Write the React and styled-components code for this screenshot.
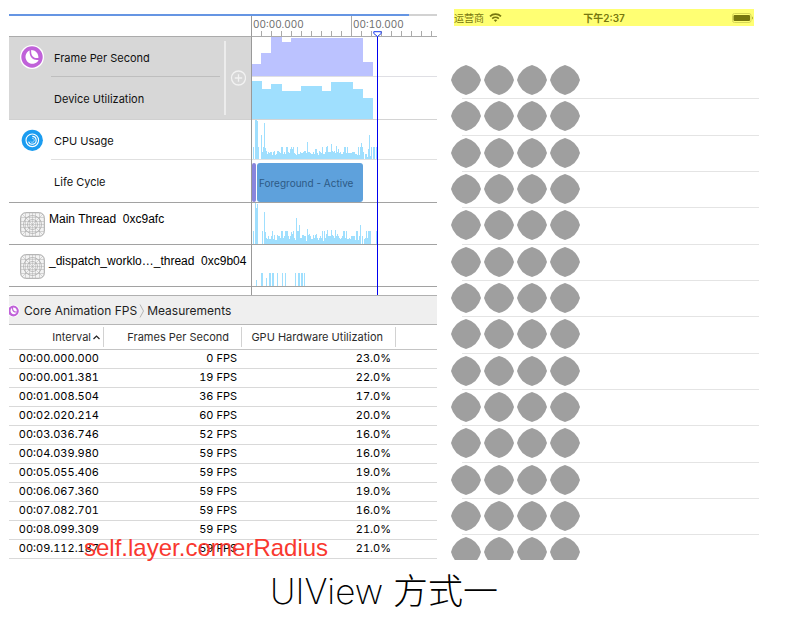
import React from "react";
import styled, { createGlobalStyle } from "styled-components";

const SANS = 'Inter, "Noto Sans CJK SC", sans-serif';
const ARIAL = '"Liberation Sans", Arial, sans-serif';

const GlobalStyle = createGlobalStyle`
  *, *::before, *::after { box-sizing: border-box; }
  body { margin: 0; background: #fff; color: #111; font: 11px/14px ${SANS}; }
  button { font: inherit; color: inherit; background: none; border: 0; padding: 0; cursor: pointer; }
`;

const Page = styled.main`
  padding: 0 35px 20px 9px;
`;
const Panels = styled.div`
  display: grid;
  grid-template-columns: minmax(0, 428fr) minmax(0, 308fr);
  column-gap: 14px;
  align-items: start;
`;

/* ---------- profiler ---------- */
const Profiler = styled.section`
  position: relative;
  padding-top: 14px;
`;
const Progress = styled.div`
  height: 2px;
  background: #d2d2d2;
  overflow: hidden;
`;
const ProgressFill = styled.div`
  width: 93.5%;
  height: 100%;
  background: #6595e3;
`;
const Timeline = styled.div`
  position: relative;
  border-bottom: 1px solid #b0b0b0;
`;
const Group = styled.div`
  display: grid;
  grid-template-columns: 242px minmax(0, 1fr);
`;
const Tracks = styled.div`
  border-left: 1px solid #999;
  min-width: 0;
  overflow: hidden;
`;
const Track = styled.div`
  height: ${(p) => p.$h}px;
  border-bottom: 1px solid ${(p) => p.$line};
  overflow: hidden;
  svg { display: block; }
`;
const RulerSpacer = styled.div`
  height: 21px;
  border-bottom: 1px solid #ababab;
`;
const Ruler = styled.div`
  display: flex;
  height: 21px;
  border-bottom: 1px solid #ababab;
  border-left: 1px solid #999;
  overflow: hidden;
  background: repeating-linear-gradient(90deg, transparent 0 9px, #aaa 9px 10px) 0 100% / 100% 5px no-repeat;
`;
const RulerMark = styled.span`
  flex: 0 0 100px;
  padding: 1px 0 0 1px;
  border-right: 1px solid #aaa;
  color: #6e6e6e;
  font-size: 10px;
  font-variant-numeric: tabular-nums;
  &:last-child { border-right: 0; }
`;
const Instrument = styled.div`
  display: grid;
  grid-template-columns: 42px minmax(0, 1fr) ${(p) => (p.$selected ? "31px" : "0")};
  background: ${(p) => (p.$selected ? "#d7d7d7" : "#fff")};
  border-bottom: 1px solid ${(p) => (p.$selected ? "#d0d0d0" : "#a2a2a2")};
`;
const IconCell = styled.div`
  padding: 8px 0 0 11px;
  svg { display: block; }
`;
const Label = styled.div`
  display: flex;
  align-items: center;
  height: ${(p) => p.$h}px;
  padding: 2px 0 0 3px;
  border-bottom: ${(p) => (p.$line ? `1px solid ${p.$line}` : "0")};
`;
const AddCell = styled.div`
  display: flex;
  align-items: center;
  justify-content: space-between;
  margin: 4px 5px 4px 4px;
  border-left: 2px solid #ececec;
  padding-left: 4px;
`;
const AddButton = styled.button`
  width: 16px;
  height: 16px;
  svg { display: block; }
`;
const Thread = styled.div`
  display: flex;
  align-items: flex-start;
  gap: 4px;
  height: 42px;
  padding: 9px 0 0 11px;
  border-bottom: 1px solid #a2a2a2;
  font: 12px/14px ${ARIAL};
  color: #000;
  white-space: pre;
  overflow: hidden;
  svg { flex: none; }
`;
const LifeTrack = styled.div`
  display: flex;
  gap: 1px;
  height: 43px;
  padding-top: 3px;
  border-bottom: 1px solid #a2a2a2;
`;
const Phase = styled.div`
  flex: none;
  display: flex;
  align-items: center;
  width: ${(p) => p.$w}px;
  border-radius: 3px;
  padding-left: ${(p) => (p.$w > 10 ? 2 : 0)}px;
  background: ${(p) => p.$color};
  color: #2d5a85;
  font-size: 10px;
  white-space: nowrap;
`;
const Filler = styled.div`
  height: 8px;
`;
const Playhead = styled.svg`
  position: absolute;
  left: 364px;
  top: 15px;
  width: 10px;
  height: calc(100% - 15px);
`;

const Crumbs = styled.nav`
  display: flex;
  align-items: center;
  height: 29px;
  padding-top: 1px;
  background: #efefef;
  border-bottom: 1px solid #b6b6b6;
  font-size: 12px;
  white-space: nowrap;
  overflow: hidden;
  svg { flex: none; }
`;
const Crumb = styled.button`
  color: #1e1e1e;
`;

const Table = styled.table`
  width: 100%;
  table-layout: fixed;
  border-collapse: separate;
  border-spacing: 0;
`;
const Col = styled.col`
  width: ${(p) => (p.$w ? `${p.$w}px` : "auto")};
`;
const Th = styled.th`
  height: 25px;
  padding: 2px 0;
  border-bottom: 1px solid #c4c4c4;
  font-weight: 400;
  color: #2c2c2c;
`;
const HeadInner = styled.div`
  display: flex;
  align-items: center;
  justify-content: flex-end;
  gap: 2px;
  height: 20px;
  padding-right: ${(p) => p.$pad}px;
  border-right: 1px solid #d2d2d2;
  white-space: nowrap;
`;
const Td = styled.td`
  height: 19px;
  padding: 0 5px 2px 0;
  border-bottom: 1px solid #d9d9d9;
  text-align: right;
  line-height: 16px;
  color: #000;
  font-variant-numeric: tabular-nums;
  white-space: nowrap;
`;
const Annotation = styled.strong`
  position: absolute;
  left: 75px;
  bottom: -3px;
  font: 400 24px/28px ${ARIAL};
  color: #f9382f;
  white-space: nowrap;
`;

/* ---------- phone ---------- */
const Phone = styled.section`
  padding-top: 9px;
  min-width: 0;
`;
const StatusBar = styled.header`
  display: grid;
  grid-template-columns: 1fr auto 1fr;
  align-items: center;
  height: 17px;
  margin: 0 5px 37px 3px;
  background: #ffff73;
  color: #77770e;
  font-size: 10px;
`;
const Carrier = styled.div`
  display: flex;
  align-items: center;
  gap: 5px;
`;
const Clock = styled.time`
  font-weight: 600;
`;
const Battery = styled.svg`
  justify-self: end;
`;
const Rows = styled.ul`
  list-style: none;
  margin: 0;
  padding: 0;
`;
const Row = styled.li`
  display: flex;
  flex-direction: column;
  justify-content: space-between;
  height: 36px;
  padding-top: 2px;
  overflow: hidden;
  &:nth-child(3n + 2) { height: 37px; }
  &:last-child { height: 25px; }
`;
const Shapes = styled.div`
  display: flex;
  gap: 3px;
  svg { flex: none; display: block; }
`;
const Divider = styled.div`
  flex: none;
  height: 1px;
  margin-left: 11px;
  background: #e4e4e4;
`;

const Title = styled.h1`
  margin: 6px 0 0;
  text-align: center;
  font: 200 35px/50px Inter, "Noto Sans CJK SC", sans-serif;
  color: #000;
`;

/* ---------- data ---------- */
const FPS = [[0, 9, 12], [9, 10, 23], [19, 11, 39], [30, 9, 34], [39, 72, 38], [111, 10, 14]];
const UTIL = [[0, 10, 38], [10, 9, 30], [19, 11, 35], [30, 19, 28], [49, 21, 33], [70, 9, 28], [79, 22, 37], [101, 10, 30], [111, 10, 21]];
const spark = (s) => s.split(" ").map((h, i) => [i, 1, Number(h)]);
const CPU = spark(
  "0 12 0 39 40 38 12 0 0 24 7 12 36 11 8 5 7 6 7 7 4 7 8 4 5 8 8 7 6 12 12 5 7 5 12 12 7 6 10 12 10 12 6 5 4 12 5 5 7 6 6 7 8 8 6 17 7 7 6 5 5 7 5 10 10 6 4 8 7 6 12 5 5 7 12 13 7 7 7 15 8 7 8 6 13 7 10 6 7 5 5 7 12 12 6 12 6 6 6 6 7 7 7 5 5 4 12 4 12 16 12 7 0 5 5 2 10 24 3 12 0 12 12 0 12 18"
);
const MAIN = spark(
  "0 13 0 41 36 40 0 0 0 0 13 0 32 12 6 5 8 5 5 8 13 5 9 4 4 9 8 8 6 13 13 6 8 13 13 13 8 5 8 12 10 13 6 4 26 13 13 19 6 6 9 9 8 8 3 15 9 10 8 5 5 9 6 9 10 6 4 6 8 6 13 3 13 6 10 14 8 8 8 14 9 8 6 14 8 10 8 6 5 6 8 13 13 6 13 5 5 6 5 8 8 8 8 4 13 13 4 8 19 0 8 0 5 6 13 6 13 13 13 0 0 0 0 0 13"
);
const DISPATCH = [[4, 1, 6], [9, 2, 13], [14, 1, 8], [17, 2, 13], [20, 2, 13], [25, 1, 13], [30, 1, 13], [33, 1, 13], [43, 1, 13], [46, 2, 13], [49, 2, 13], [52, 1, 13]];

const SAMPLES = [
  ["00:00.000.000", 0, "23.0%"],
  ["00:00.001.381", 19, "22.0%"],
  ["00:01.008.504", 36, "17.0%"],
  ["00:02.020.214", 60, "20.0%"],
  ["00:03.036.746", 52, "16.0%"],
  ["00:04.039.980", 59, "16.0%"],
  ["00:05.055.406", 59, "19.0%"],
  ["00:06.067.360", 59, "19.0%"],
  ["00:07.082.701", 59, "16.0%"],
  ["00:08.099.309", 59, "21.0%"],
  ["00:09.112.187", 59, "21.0%"],
];

/* ---------- drawings ---------- */
const Bars = ({ data, height, color = "#9fdffe" }) => (
  <svg width="185" height={height} shapeRendering="crispEdges" aria-hidden="true">
    <path fill={color} d={data.map(([x, w, h]) => `M${x} ${height - h}h${w}v${h}h${-w}z`).join("")} />
  </svg>
);

const FpsIcon = () => (
  <svg width="24" height="24" viewBox="0 0 24 24" aria-hidden="true">
    <circle cx="12" cy="12" r="12" fill="#fff" />
    <circle cx="12" cy="12" r="10.7" fill="#c062d9" />
    <path d="M9.6 5.6A6.9 6.9 0 1 0 18.6 14.9C14 15.6 9.2 13.6 9.6 5.6Z" fill="#fff" />
    <path d="M11.2 4.9C15.2 4.9 18.6 8 18.4 12.9C14.4 13.6 10.6 11.6 11.2 4.9Z" fill="#fff" />
  </svg>
);

const CpuIcon = () => (
  <svg width="24" height="24" viewBox="0 0 24 24" fill="none" stroke="#fff" aria-hidden="true">
    <circle cx="12.3" cy="12.3" r="10.6" fill="#1b9cf0" stroke="none" />
    <circle cx="12.3" cy="12.3" r="6.3" strokeWidth="1.1" />
    <path d="M12.3 8.4A3.9 3.9 0 1 1 8.6 13.6" strokeWidth="1.1" />
    <path d="M12 10.3A2 2 0 1 1 10.6 13.4" strokeWidth="0.8" opacity="0.7" />
  </svg>
);

const AppIcon = () => (
  <svg width="25" height="25" viewBox="0 0 25 25" fill="none" stroke="#acacac" strokeWidth="0.8" aria-hidden="true">
    <rect x="0.7" y="0.7" width="23.6" height="23.6" rx="5" fill="#f3f3f3" stroke="#a6a6a6" strokeWidth="1" />
    <path d="M5.5 1v23M9.5 1v23M12.5 1v23M15.5 1v23M19.5 1v23M1 5.5h23M1 9.5h23M1 12.5h23M1 15.5h23M1 19.5h23M2 2l21 21M23 2L2 23" opacity="0.6" />
    <circle cx="12.5" cy="12.5" r="9" />
    <circle cx="12.5" cy="12.5" r="5" />
  </svg>
);

const Shape = () => (
  <svg width="30" height="30" viewBox="0 0 30 30" aria-hidden="true">
    <path d="M15 0A21 21 0 0 1 30 15A21 21 0 0 1 15 30A21 21 0 0 1 0 15A21 21 0 0 1 15 0Z" fill="#9f9f9f" />
  </svg>
);

export default function App() {
  return (
    <Page>
      <GlobalStyle />
      <Panels>
        <Profiler>
          <Progress><ProgressFill /></Progress>
          <Timeline>
            <Group>
              <RulerSpacer />
              <Ruler>
                <RulerMark>00:00.000</RulerMark>
                <RulerMark>00:10.000</RulerMark>
              </Ruler>
            </Group>
            <Group>
              <Instrument $selected>
                <IconCell><FpsIcon /></IconCell>
                <div>
                  <Label $h={40} $line="#bebebe">Frame Per Second</Label>
                  <Label $h={42}>Device Utilization</Label>
                </div>
                <AddCell>
                  <AddButton aria-label="Add">
                    <svg width="16" height="16" viewBox="0 0 16 16" fill="none" stroke="#f2f2f2" strokeWidth="1.3" aria-hidden="true">
                      <circle cx="8.5" cy="8" r="7" />
                      <path d="M8.5 4.3v7.4M4.8 8h7.4" />
                    </svg>
                  </AddButton>
                </AddCell>
              </Instrument>
              <Tracks>
                <Track $h={40} $line="#dfdfe4"><Bars data={FPS} height={39} color="#bbc2ff" /></Track>
                <Track $h={43} $line="#d4d4d4"><Bars data={UTIL} height={42} /></Track>
              </Tracks>
            </Group>
            <Group>
              <Instrument>
                <IconCell><CpuIcon /></IconCell>
                <div>
                  <Label $h={40} $line="#e0e0e0">CPU Usage</Label>
                  <Label $h={42}>Life Cycle</Label>
                </div>
              </Instrument>
              <Tracks>
                <Track $h={40} $line="#e0e0e0"><Bars data={CPU} height={39} /></Track>
                <LifeTrack>
                  <Phase $w={4} $color="#8985dc" />
                  <Phase $w={106} $color="#5ea1dc">Foreground - Active</Phase>
                </LifeTrack>
              </Tracks>
            </Group>
            <Group>
              <Thread><AppIcon />Main Thread  0xc9afc</Thread>
              <Tracks><Track $h={42} $line="#a2a2a2"><Bars data={MAIN} height={41} /></Track></Tracks>
            </Group>
            <Group>
              <Thread><AppIcon />_dispatch_worklo…_thread  0xc9b04</Thread>
              <Tracks><Track $h={42} $line="#a2a2a2"><Bars data={DISPATCH} height={41} /></Track></Tracks>
            </Group>
            <Group>
              <Filler />
              <Tracks />
            </Group>
            <Playhead aria-hidden="true">
              <path d="M4.5 5V300" stroke="#0000f0" />
              <path d="M0.8 0.7H8.2V2.5L4.5 5.5L0.8 2.5Z" fill="#fff" stroke="#1a3cf0" />
            </Playhead>
          </Timeline>
          <Crumbs aria-label="Detail path">
            <svg width="15" height="14" viewBox="0 0 15 14" aria-hidden="true">
              <circle cx="4.4" cy="7" r="6.2" fill="#fff" />
              <circle cx="4.4" cy="7" r="5.4" fill="#c062d9" />
              <path d="M3 4A3.4 3.4 0 1 0 7.8 8.6C5 8.8 2.8 7.6 3 4Z" fill="#fff" />
              <path d="M4.1 3.5C6.3 3.5 7.9 5 7.8 7.4C5.6 7.7 3.8 6.6 4.1 3.5Z" fill="#fff" />
            </svg>
            <Crumb>Core Animation FPS</Crumb>
            <svg width="10" height="16" viewBox="0 0 10 16" fill="none" stroke="#b5b5b5" aria-hidden="true">
              <path d="M3 1.5L6.5 8L3 14.5" />
            </svg>
            <Crumb>Measurements</Crumb>
          </Crumbs>
          <Table>
            <colgroup><Col $w={95} /><Col $w={138} /><Col $w={154} /><Col /></colgroup>
            <thead>
              <tr>
                <Th scope="col">
                  <HeadInner $pad={3}>
                    Interval
                    <svg width="7" height="5" viewBox="0 0 7 5" fill="none" stroke="#222" strokeWidth="1.2" aria-hidden="true">
                      <path d="M0.5 4L3.5 1L6.5 4" />
                    </svg>
                  </HeadInner>
                </Th>
                <Th scope="col"><HeadInner $pad={12}>Frames Per Second</HeadInner></Th>
                <Th scope="col"><HeadInner $pad={12}>GPU Hardware Utilization</HeadInner></Th>
                <Th as="td" />
              </tr>
            </thead>
            <tbody>
              {SAMPLES.map(([time, fps, gpu]) => (
                <tr key={time}>
                  <Td>{time}</Td>
                  <Td>{fps} FPS</Td>
                  <Td>{gpu}</Td>
                  <Td />
                </tr>
              ))}
            </tbody>
          </Table>
          <Annotation>self.layer.cornerRadius</Annotation>
        </Profiler>

        <Phone>
          <StatusBar>
            <Carrier>
              运营商
              <svg width="13" height="9" viewBox="0 0 13 9" fill="none" stroke="currentColor" strokeWidth="1.7" aria-hidden="true">
                <path d="M1 3.3C4 0.4 9 0.4 12 3.3" />
                <path d="M3.2 5.6C5 4 8 4 9.8 5.6" />
                <path d="M4.7 7.1L6.5 9L8.3 7.1C7.3 6.2 5.7 6.2 4.7 7.1Z" fill="currentColor" stroke="none" />
              </svg>
            </Carrier>
            <Clock>下午2:37</Clock>
            <Battery width="22" height="10" viewBox="0 0 22 10" aria-hidden="true">
              <rect x="0.5" y="0.5" width="18.5" height="9" rx="2" fill="none" stroke="#d6d656" />
              <rect x="1.5" y="2" width="16.5" height="6" rx="1" fill="#77770e" />
              <path d="M20 3.5v3c1.2-0.5 1.2-2.5 0-3z" fill="#a8a830" />
            </Battery>
          </StatusBar>
          <Rows>
            {Array.from({ length: 14 }, (_, i) => (
              <Row key={i}>
                <Shapes><Shape /><Shape /><Shape /><Shape /></Shapes>
                {i < 13 && <Divider />}
              </Row>
            ))}
          </Rows>
        </Phone>
      </Panels>
      <Title>UIView 方式一</Title>
    </Page>
  );
}
